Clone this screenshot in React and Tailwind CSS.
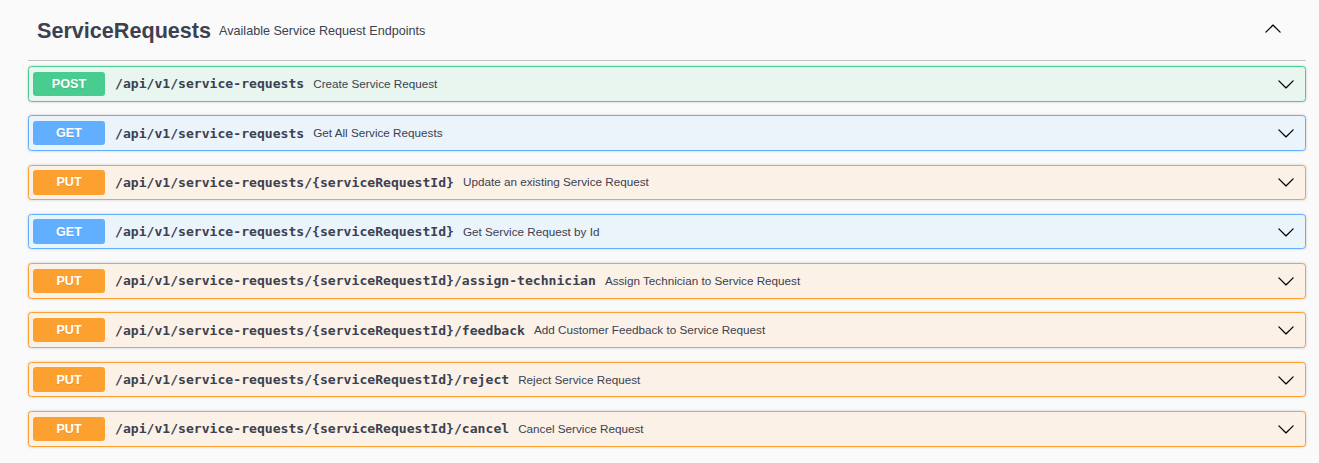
import React from "react";

const ops = [
  { m: "POST", path: "/api/v1/service-requests", desc: "Create Service Request" },
  { m: "GET", path: "/api/v1/service-requests", desc: "Get All Service Requests" },
  { m: "PUT", path: "/api/v1/service-requests/{serviceRequestId}", desc: "Update an existing Service Request" },
  { m: "GET", path: "/api/v1/service-requests/{serviceRequestId}", desc: "Get Service Request by Id" },
  { m: "PUT", path: "/api/v1/service-requests/{serviceRequestId}/assign-technician", desc: "Assign Technician to Service Request" },
  { m: "PUT", path: "/api/v1/service-requests/{serviceRequestId}/feedback", desc: "Add Customer Feedback to Service Request" },
  { m: "PUT", path: "/api/v1/service-requests/{serviceRequestId}/reject", desc: "Reject Service Request" },
  { m: "PUT", path: "/api/v1/service-requests/{serviceRequestId}/cancel", desc: "Cancel Service Request" },
];

const styles = {
  POST: { box: "bg-[#e8f6ef] border-[#49cc90]", badge: "bg-[#49cc90]" },
  GET: { box: "bg-[#ebf3fb] border-[#61affe]", badge: "bg-[#61affe]" },
  PUT: { box: "bg-[#fbf1e6] border-[#fca130]", badge: "bg-[#fca130]" },
};

function Arrow({ up }) {
  return (
    <svg width="18" height="18" viewBox="0 0 20 20" className={up ? "rotate-180" : ""}>
      <path
        fill="#000"
        d="M17.418 6.109c.272-.268.709-.268.979 0s.271.701 0 .969l-7.908 7.83c-.27.268-.707.268-.979 0l-7.908-7.83c-.27-.268-.27-.701 0-.969.271-.268.709-.268.979 0L10 13.25l7.418-7.141z"
      />
    </svg>
  );
}

export default function App() {
  return (
    <div className="min-h-[463px] w-full bg-[#fafafa] text-[#3b4151]">
      <div className="ml-[28px] w-[1278px]">
        <div className="flex h-[61px] items-center border-b border-[rgba(59,65,81,0.3)] pl-[9px] pr-[24px] pt-[2px]">
          <span className="font-['Liberation_Sans',Arial,sans-serif] text-[21.6px] font-bold leading-none">
            ServiceRequests
          </span>
          <span className="ml-[8px] pt-[1px] font-['Liberation_Sans',Arial,sans-serif] text-[12.6px] leading-none">
            Available Service Request Endpoints
          </span>
          <div className="ml-auto -mt-[5px] flex">
            <Arrow up />
          </div>
        </div>
        <div className="pt-[5px]">
          {ops.map((o, i) => (
            <div
              key={i}
              className={`mb-[13.8px] flex h-[35.5px] items-center rounded-[3.6px] border pl-[4px] pr-[10px] shadow-[0_0_3px_rgba(0,0,0,0.19)] ${styles[o.m].box}`}
            >
              <div
                className={`flex h-[24.5px] w-[72px] shrink-0 items-center justify-center rounded-[3px] pt-[1px] font-['Liberation_Sans',Arial,sans-serif] text-[12.6px] font-bold text-white [text-shadow:0_1px_0_rgba(0,0,0,0.1)] ${styles[o.m].badge}`}
              >
                {o.m}
              </div>
              <span className="pl-[10px] font-['DejaVu_Sans_Mono',monospace] text-[13.1px] font-bold leading-none text-[#3b4151]">
                {o.path}
              </span>
              <span className="pl-[9px] font-['Liberation_Sans',Arial,sans-serif] text-[11.7px] leading-none text-[#3b4151]">
                {o.desc}
              </span>
              <div className="ml-auto flex">
                <Arrow />
              </div>
            </div>
          ))}
        </div>
      </div>
    </div>
  );
}
